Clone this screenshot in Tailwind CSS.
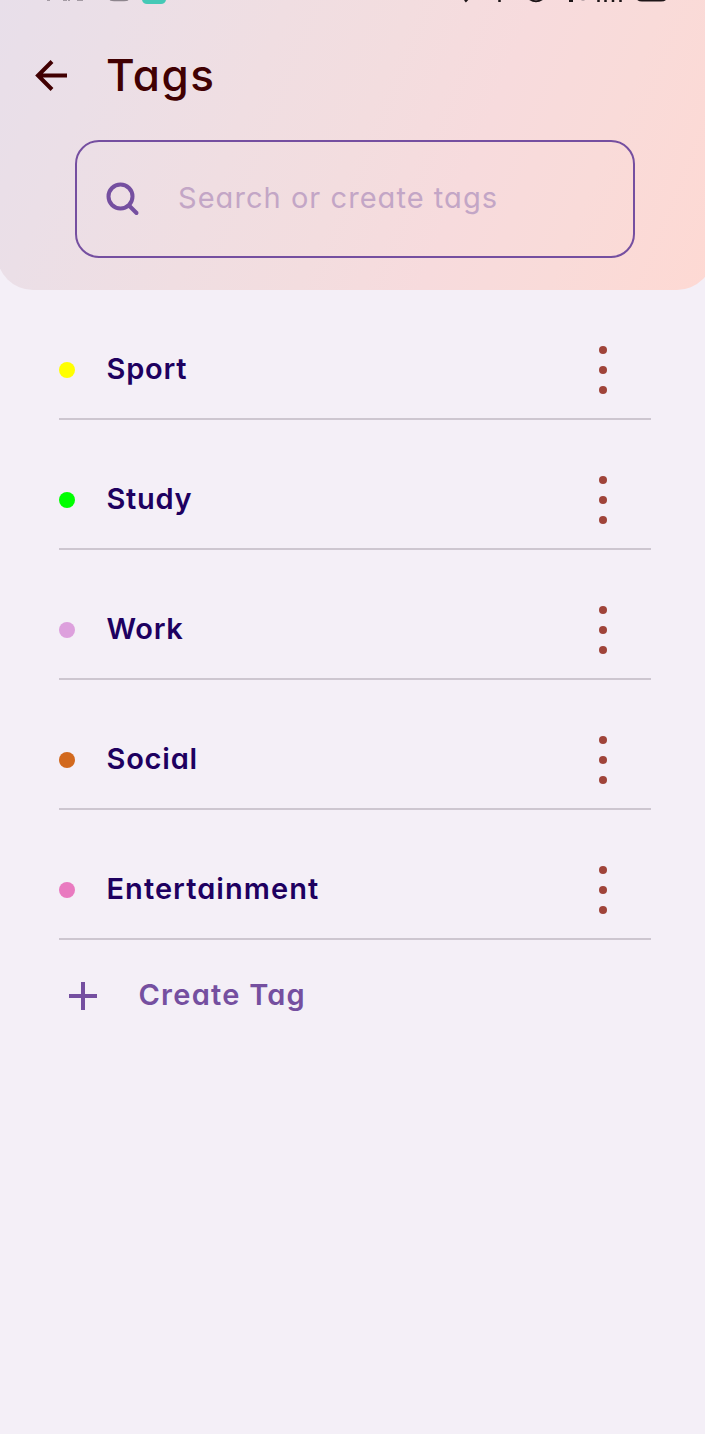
<!DOCTYPE html>
<html lang="en">
<head>
<meta charset="utf-8">
<title>Tags</title>
<script src="https://cdn.jsdelivr.net/npm/@tailwindcss/browser@4"></script>
</head>
<body class="min-h-screen overflow-x-hidden bg-[#f4eff7] font-[Inter,'Open_Sans',sans-serif] [font-feature-settings:'cv11']">
<header class="-ml-[3px] flex h-[290px] w-[716px] flex-col rounded-b-[36px] bg-[linear-gradient(112deg,#e8dfea_0%,#ebdfe7_15%,#f0dee2_35%,#f3dddf_50%,#f7dbdd_65%,#f9dbd9_80%,#fed9d3_100%)] pl-[3px]">
  <svg class="h-[6px] w-[705px] shrink-0" viewBox="0 0 705 6" fill="none">
    <path d="M47 0h3M63 0h4M68 0h2M77 0h6" stroke="#8d858d" stroke-width="1.5"/>
    <path d="M110 0q2 .7 4 .7h10q3 0 4-.7" stroke="#8d858d" stroke-width="1.2"/>
    <path d="M142 0H166Q165 4 161 4H147Q143 4 142 0Z" fill="#45c9b6"/>
    <g stroke="#1d1517">
      <path d="M465 1.500l3-3M499.500 0v2M598.500 0v2M605.500 0v2M613 0v2M620.500 0v2" stroke-width="2.500"/>
      <path d="M529.500 -1q6.500 4.500 13 0M638 -.5q1.500 1 4 1h19q3 0 4-1" stroke-width="2"/>
      <path d="M571 0v2" stroke-width="4"/>
    </g>
    <path d="M583 0v1" stroke="#bfa9ad" stroke-width="3"/>
  </svg>
  <div class="flex h-[134px] shrink-0 items-center pt-[5px] pl-[35px]">
    <svg class="h-8 w-8" viewBox="0 0 32 32" fill="none" stroke="#410002" stroke-width="4"><path d="M32 15.500H3M17 1.500L3 15.500L17 29.500"/></svg>
    <h1 class="ml-[39px] w-max pb-0.5 text-[44px] font-medium leading-none tracking-[1.5px] text-[#410002]">Tags</h1>
  </div>
  <div class="ml-[75px] flex h-[118px] w-[560px] items-center rounded-[24px] border-2 border-[#754fa0] pl-[29px]">
    <svg class="h-[34px] w-[34px]" viewBox="0 0 34 34" fill="none" stroke="#754fa0" stroke-width="4"><circle cx="14.500" cy="14.500" r="12"/><path d="M23.500 24L30.500 31" stroke-linecap="round"/></svg>
    <span class="ml-[38px] w-max whitespace-nowrap pb-[3px] text-[29px] leading-none tracking-[1.05px] text-[#c3a6c6]">Search or create tags</span>
  </div>
</header>
<main class="ml-[58.500px] w-[592px]">
  <ul>
    <li class="flex h-[130px] items-end border-b-2 border-[#cdc6d0] pb-[22px]">
      <div class="flex h-[52px] w-full items-center"><i class="size-4 rounded-full bg-[#ffff00]"></i><span class="ml-8 pb-1 text-[29px] font-semibold leading-none tracking-[0.8px] text-[#1e0060]">Sport</span><div class="mr-[44px] ml-auto flex flex-col gap-3"><i class="size-2 rounded-full bg-[#a0443a]"></i><i class="size-2 rounded-full bg-[#a0443a]"></i><i class="size-2 rounded-full bg-[#a0443a]"></i></div></div>
    </li>
    <li class="flex h-[130px] items-end border-b-2 border-[#cdc6d0] pb-[22px]">
      <div class="flex h-[52px] w-full items-center"><i class="size-4 rounded-full bg-[#00ff00]"></i><span class="ml-8 pb-1 text-[29px] font-semibold leading-none tracking-[0.7px] text-[#1e0060]">Study</span><div class="mr-[44px] ml-auto flex flex-col gap-3"><i class="size-2 rounded-full bg-[#a0443a]"></i><i class="size-2 rounded-full bg-[#a0443a]"></i><i class="size-2 rounded-full bg-[#a0443a]"></i></div></div>
    </li>
    <li class="flex h-[130px] items-end border-b-2 border-[#cdc6d0] pb-[22px]">
      <div class="flex h-[52px] w-full items-center"><i class="size-4 rounded-full bg-[#dda0dd]"></i><span class="ml-8 pb-1 text-[29px] font-semibold leading-none tracking-[0.7px] text-[#1e0060]">Work</span><div class="mr-[44px] ml-auto flex flex-col gap-3"><i class="size-2 rounded-full bg-[#a0443a]"></i><i class="size-2 rounded-full bg-[#a0443a]"></i><i class="size-2 rounded-full bg-[#a0443a]"></i></div></div>
    </li>
    <li class="flex h-[130px] items-end border-b-2 border-[#cdc6d0] pb-[22px]">
      <div class="flex h-[52px] w-full items-center"><i class="size-4 rounded-full bg-[#d2691e]"></i><span class="ml-8 pb-1 text-[29px] font-semibold leading-none tracking-[0.8px] text-[#1e0060]">Social</span><div class="mr-[44px] ml-auto flex flex-col gap-3"><i class="size-2 rounded-full bg-[#a0443a]"></i><i class="size-2 rounded-full bg-[#a0443a]"></i><i class="size-2 rounded-full bg-[#a0443a]"></i></div></div>
    </li>
    <li class="flex h-[130px] items-end border-b-2 border-[#cdc6d0] pb-[22px]">
      <div class="flex h-[52px] w-full items-center"><i class="size-4 rounded-full bg-[#e97ac0]"></i><span class="ml-8 pb-1 text-[29px] font-semibold leading-none tracking-[1.05px] text-[#1e0060]">Entertainment</span><div class="mr-[44px] ml-auto flex flex-col gap-3"><i class="size-2 rounded-full bg-[#a0443a]"></i><i class="size-2 rounded-full bg-[#a0443a]"></i><i class="size-2 rounded-full bg-[#a0443a]"></i></div></div>
    </li>
  </ul>
  <div class="mt-[32px] flex h-12 items-center pl-[9px]">
    <svg class="h-[30px] w-[30px]" viewBox="0 0 30 30" stroke="#754fa0" stroke-width="4"><path d="M15 1v28M1 15h28"/></svg>
    <span class="ml-[41px] pb-1 text-[29px] font-semibold leading-none tracking-[1.25px] text-[#754fa0]">Create Tag</span>
  </div>
</main>
</body>
</html>
